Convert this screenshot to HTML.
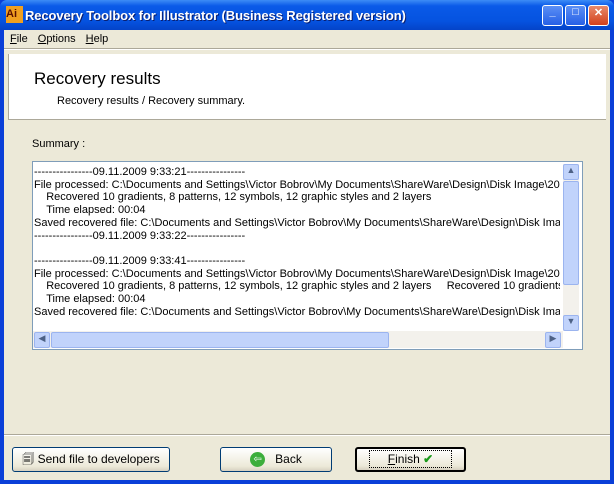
<!DOCTYPE html><html><head><style>
*{margin:0;padding:0;box-sizing:border-box}
body{width:614px;height:484px;overflow:hidden;font-family:"Liberation Sans",sans-serif;font-size:11px;background:#0a3fd8;position:relative}
.win{position:absolute;left:4px;top:30px;width:606px;height:450px;background:#ece9d8}
.tb{position:absolute;left:0;top:0;width:614px;height:30px;background:linear-gradient(#3d8cf6,#0a5ae8 20%,#0553e0 70%,#0443c8);border-radius:7px 7px 0 0}
.tt{position:absolute;left:25px;top:8px;color:#fff;font-weight:bold;font-size:13px;letter-spacing:-0.1px;text-shadow:1px 1px #0a1e6e}
.btn{position:absolute;top:5px;width:21px;height:21px;border:1px solid #fff;border-radius:3px;background:linear-gradient(#5b8ff5,#2660e6);color:#fff;text-align:center;font-weight:bold}
.abs{position:absolute}
.menu span{margin-right:10px}
.pb{position:absolute;height:25px;top:417px;border:1px solid #003c74;border-radius:3px;background:linear-gradient(#fff,#ece9d8 80%,#d6d0c0);text-align:center;line-height:23px;font-size:12px}
.tx{position:absolute;left:30px;top:135px;width:526px;height:165px;overflow:hidden;white-space:nowrap;line-height:12.7px;font-size:11px;background:#fff;padding-top:1px}
</style></head><body>
<div class="tb">
<div class="abs" style="left:6px;top:6px;width:17px;height:17px;background:#f0a020;color:#5a1000;font-weight:bold;font-size:11px;line-height:17px">Ai</div>
<div class="tt">Recovery Toolbox for Illustrator (Business Registered version)</div>
<div class="btn" style="left:542px">_</div>
<div class="btn" style="left:565px">□</div>
<div class="btn" style="left:588px;background:linear-gradient(#e88a6a,#d2401c)">✕</div>
</div>
<div class="win">
<div class="abs menu" style="left:6px;top:3px;font-size:11px"><span><u>F</u>ile</span><span><u>O</u>ptions</span><span><u>H</u>elp</span></div>
<div class="abs" style="left:0;top:18px;width:606px;height:2px;border-top:1px solid #aca899;border-bottom:1px solid #fff"></div>
<div class="abs" style="left:4px;top:24px;width:598px;height:66px;background:#fff;border-left:1px solid #aca899;border-bottom:1px solid #aca899"></div>
<div class="abs" style="left:30px;top:39px;font-size:17px">Recovery results</div>
<div class="abs" style="left:53px;top:65px">Recovery results / Recovery summary.</div>
<div class="abs" style="left:28px;top:108px">Summary :</div>
<div class="abs" style="left:28px;top:131px;width:551px;height:189px;border:1px solid #7f9db9;background:#fff"></div>
<div class="tx">----------------09.11.2009 9:33:21----------------<br>File processed: C:\Documents and Settings\Victor Bobrov\My Documents\ShareWare\Design\Disk Image\2009<br>&nbsp;&nbsp;&nbsp;&nbsp;Recovered 10 gradients, 8 patterns, 12 symbols, 12 graphic styles and 2 layers<br>&nbsp;&nbsp;&nbsp;&nbsp;Time elapsed: 00:04<br>Saved recovered file: C:\Documents and Settings\Victor Bobrov\My Documents\ShareWare\Design\Disk Image<br>----------------09.11.2009 9:33:22----------------<br><br>----------------09.11.2009 9:33:41----------------<br>File processed: C:\Documents and Settings\Victor Bobrov\My Documents\ShareWare\Design\Disk Image\2009<br>&nbsp;&nbsp;&nbsp;&nbsp;Recovered 10 gradients, 8 patterns, 12 symbols, 12 graphic styles and 2 layers&nbsp;&nbsp;&nbsp;&nbsp; Recovered 10 gradients, 8 p<br>&nbsp;&nbsp;&nbsp;&nbsp;Time elapsed: 00:04<br>Saved recovered file: C:\Documents and Settings\Victor Bobrov\My Documents\ShareWare\Design\Disk Image</div>
<div class="abs" style="left:559px;top:134px;width:16px;height:167px;background:#f3f1ec"></div>
<div class="abs" style="left:559px;top:134px;width:16px;height:16px;background:#c1d3fb;border:1px solid #9bb4ef;border-radius:2px;font-size:9px;text-align:center;color:#4d6185">▲</div>
<div class="abs" style="left:559px;top:151px;width:16px;height:104px;background:#c1d3fb;border:1px solid #9bb4ef;border-radius:2px"></div>
<div class="abs" style="left:559px;top:285px;width:16px;height:16px;background:#c1d3fb;border:1px solid #9bb4ef;border-radius:2px;font-size:9px;text-align:center;color:#4d6185">▼</div>
<div class="abs" style="left:29px;top:301px;width:530px;height:17px;background:#f3f1ec"></div>
<div class="abs" style="left:30px;top:302px;width:16px;height:16px;background:#c1d3fb;border:1px solid #9bb4ef;border-radius:2px;font-size:9px;text-align:center;color:#4d6185">◀</div>
<div class="abs" style="left:47px;top:302px;width:338px;height:16px;background:#c1d3fb;border:1px solid #9bb4ef;border-radius:2px"></div>
<div class="abs" style="left:541px;top:302px;width:16px;height:16px;background:#c1d3fb;border:1px solid #9bb4ef;border-radius:2px;font-size:9px;text-align:center;color:#4d6185">▶</div>
<div class="abs" style="left:0;top:404px;width:606px;height:2px;border-top:1px solid #aca899;border-bottom:1px solid #fff"></div>
<div class="pb" style="left:8px;width:158px">🗐 Send file to developers</div>
<div class="pb" style="left:216px;width:112px"><span style="display:inline-block;width:15px;height:15px;border-radius:50%;background:#3cae3c;color:#fff;font-size:10px;line-height:15px;vertical-align:middle;margin-right:10px">⇦</span>Back</div>
<div class="pb" style="left:351px;width:111px;border:2px solid #000;line-height:21px"><span style="border:1px dotted #000;padding:1px 18px"><u>F</u>inish <span style="color:#1a9a1a;font-weight:bold">✔</span></span></div>
</div>
</body></html>
